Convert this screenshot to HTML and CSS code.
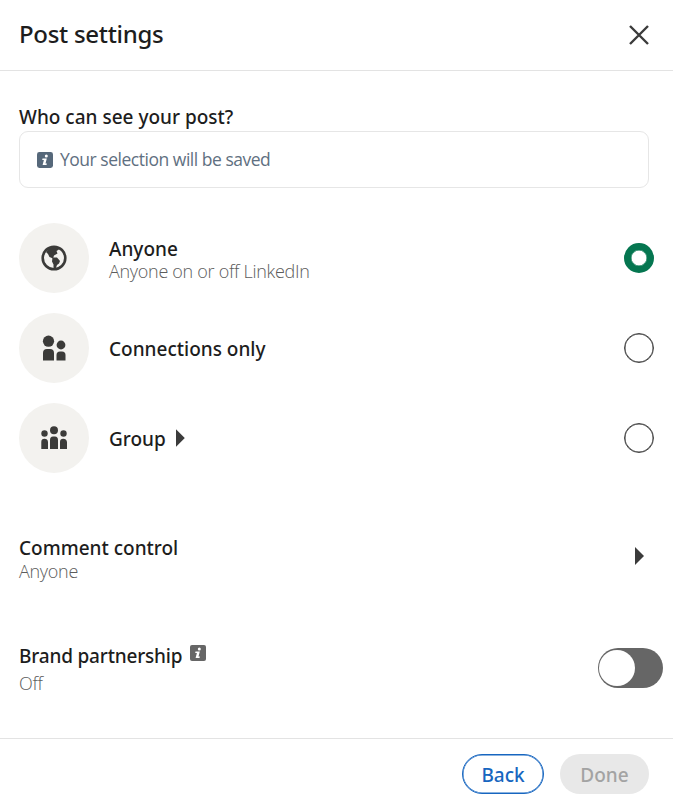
FILE: index.html
```html
<!DOCTYPE html>
<html lang="en">
<head>
<meta charset="utf-8">
<title>Post settings</title>
<link rel="stylesheet" href="styles.css">
</head>
<body>
<div class="dialog">
  <header class="header">
    <h1 class="title">Post settings</h1>
    <button class="close" aria-label="Close">
      <svg width="22" height="22" viewBox="0 0 22 22"><path d="M2 2l18 18M20 2L2 20" fill="none" stroke="#3b3b3b" stroke-width="2.4"/></svg>
    </button>
  </header>
  <main class="body">
    <h2 class="label question">Who can see your post?</h2>
    <div class="notice">
      <svg width="16" height="16" viewBox="0 0 16 16"><rect width="16" height="16" rx="2.4" fill="#56687a"/><circle cx="9.3" cy="4" r="1.5" fill="#fff"/><path d="M5.500 6.500h4.300L8.500 11.500h1.400L9.500 13H5.600L6.900 8H5.200z" fill="#fff"/></svg>
      <span class="notice-text">Your selection will be saved</span>
    </div>
    <div class="options">
      <div class="option">
        <div class="avatar">
          <svg width="26" height="26" viewBox="0 0 26 26"><circle cx="13" cy="13" r="11.3" fill="none" stroke="#3b3b39" stroke-width="2.6"/><path d="M5 7L9 2h7.500l1.500 2.500-2.500 1.500 1 2.500-3.500 2-1 3-3.500-1.500-1.500-3z" fill="#3b3b39"/><path d="M11.500 12.500h4.500l3 3.500-1 2.500-2 1.500-1.500 4-2 .500v-5l-1.500-3z" fill="#3b3b39"/></svg>
        </div>
        <div class="text">
          <div class="label anyone">Anyone</div>
          <div class="sub">Anyone on or off LinkedIn</div>
        </div>
        <span class="radio checked"></span>
      </div>
      <div class="option">
        <div class="avatar">
          <svg width="26" height="26" viewBox="0 0 26 26" fill="#3b3b39"><circle cx="7.500" cy="6.200" r="5.600"/><circle cx="20" cy="10" r="4.400"/><path d="M2 25.500V18q0-4 4-4h3q4 0 4 4v7.500zM15.500 25.500V20q0-3.500 3.500-3.500h2q3.500 0 3.500 3.500v5.500z"/></svg>
        </div>
        <div class="text"><div class="label">Connections only</div></div>
        <span class="radio"></span>
      </div>
      <div class="option">
        <div class="avatar">
          <svg width="26" height="26" viewBox="0 0 26 26" fill="#3b3b39"><circle cx="13" cy="5.300" r="4"/><circle cx="3.500" cy="8.500" r="3.200"/><circle cx="22.500" cy="8.500" r="3.200"/><path d="M9 24V15q0-3.500 3-3.500h2q3 0 3 3.500v9zM.300 24V17q0-3.300 3.200-3.300T7 17v7zM19 24V17q0-3.300 3.200-3.300T26 17v7z"/></svg>
        </div>
        <div class="text"><div class="label group">Group<i class="caret"></i></div></div>
        <span class="radio"></span>
      </div>
    </div>
    <section class="row comment">
      <div>
        <h2 class="label">Comment control</h2>
        <div class="sub">Anyone</div>
      </div>
      <i class="caret"></i>
    </section>
    <section class="row brand">
      <div>
        <h2 class="label"><span class="brand-label">Brand partnership</span>
          <svg class="info" width="16" height="16" viewBox="0 0 16 16"><rect width="16" height="16" rx="2" fill="#666"/><circle cx="9.300" cy="4" r="1.500" fill="#fff"/><path d="M5.500 6.500h4.300L8.500 11.500h1.400L9.500 13H5.600L6.900 8H5.200z" fill="#fff"/></svg>
        </h2>
        <div class="sub off">Off</div>
      </div>
      <span class="toggle"><span class="knob"></span></span>
    </section>
  </main>
  <footer class="footer">
    <button class="btn back">Back</button>
    <button class="btn done" disabled>Done</button>
  </footer>
</div>
</body>
</html>
```
FILE: styles.css
```css
* { box-sizing: border-box; }
body {
  margin: 0;
  background: #fff;
  color: #1d1d1d;
  font-family: "Noto Sans", "Open Sans", sans-serif;
}
h1, h2 { margin: 0; }
button { font-family: inherit; cursor: pointer; }
svg { display: block; flex: none; }
.dialog {
  height: 802px;
  display: flex;
  flex-direction: column;
}
.header {
  height: 71px;
  flex: none;
  border-bottom: 1px solid #e3e3e3;
  display: flex;
  align-items: center;
  justify-content: space-between;
  padding: 0 23px 0 19px;
}
.title {
  font-size: 24px;
  line-height: 34px;
  font-weight: 500;
  letter-spacing: -0.3px;
  margin-top: -2px;
}
.close {
  border: 0;
  background: none;
  padding: 0;
}
.body {
  flex: 1;
  padding: 33px 0 0 19px;
}
.label {
  display: flex;
  font-size: 19px;
  line-height: 26px;
  font-weight: 500;
  white-space: nowrap;
}
.question { height: 27px; }
.notice {
  width: 630px;
  height: 57px;
  border: 1px solid #e6e6e6;
  border-radius: 9px;
  display: flex;
  align-items: center;
  gap: 7px;
  padding-left: 17px;
  color: #56687a;
}
.notice-text {
  font-family: "Open Sans", sans-serif;
  font-size: 17.500px;
  line-height: 24px;
  letter-spacing: -0.48px;
  margin-top: -1px;
  color: #5f7081;
}
.options {
  display: flex;
  flex-direction: column;
  gap: 20px;
  margin-top: 35px;
}
.option {
  height: 70px;
  display: flex;
  align-items: center;
  padding-right: 19px;
}
.avatar {
  width: 70px;
  height: 70px;
  border-radius: 50%;
  background: #f3f2ef;
  display: flex;
  align-items: center;
  justify-content: center;
}
.text { flex: 1; padding: 2px 0 0 20px; }
.sub {
  font-family: "Open Sans", sans-serif;
  font-size: 18px;
  line-height: 22px;
  font-weight: 300;
  letter-spacing: -0.3px;
  color: #5c5c5c;
}
.anyone { line-height: 24px; padding-top: 1px; margin-bottom: -1px; }
.radio {
  width: 30px;
  height: 30px;
  border: 1px solid #444;
  border-radius: 50%;
  box-shadow: inset 0 0 0 0.5px #444;
}
.checked {
  border: 7px solid #057650;
  box-shadow: inset 0 0 0 0.5px #057650;
}
.group { align-items: center; gap: 10px; }
.caret {
  width: 9px;
  height: 18px;
  background: #3b3b3b;
  clip-path: polygon(0 0, 100% 50%, 0 100%);
}
.group .caret { margin-top: -2px; }
.row {
  display: flex;
  align-items: center;
  justify-content: space-between;
}
.comment { margin-top: 61px; padding-right: 29px; height: 48px; }
.comment .sub { margin-top: -1px; }
.comment .caret { margin-top: -4px; }
.brand { margin-top: 60px; padding-right: 10px; height: 52px; }
.brand-label { letter-spacing: -0.18px; padding-top: 1px; }
.info { margin: 3px 0 0 8px; }
.off { margin-top: 3px; }
.toggle {
  width: 65px;
  height: 40px;
  border-radius: 20px;
  background: #666;
  padding: 2px 1px;
}
.knob {
  display: block;
  width: 36px;
  height: 36px;
  border-radius: 50%;
  background: #fff;
}
.footer {
  height: 64px;
  flex: none;
  border-top: 1px solid #e3e3e3;
  display: flex;
  justify-content: flex-end;
  gap: 16px;
  padding: 15px 24px 0 0;
}
.btn {
  height: 40px;
  border-radius: 20px;
  font-size: 19px;
  line-height: 26px;
  font-weight: 500;
  padding: 1px 0 0;
}
.back {
  width: 82px;
  border: 1px solid #1766c0;
  box-shadow: inset 0 0 0 0.5px #1766c0;
  background: #fff;
  color: #1766c0;
}
.done { width: 89px; border: 0; background: #e8e8e8; color: #a3a3a3; }
```
